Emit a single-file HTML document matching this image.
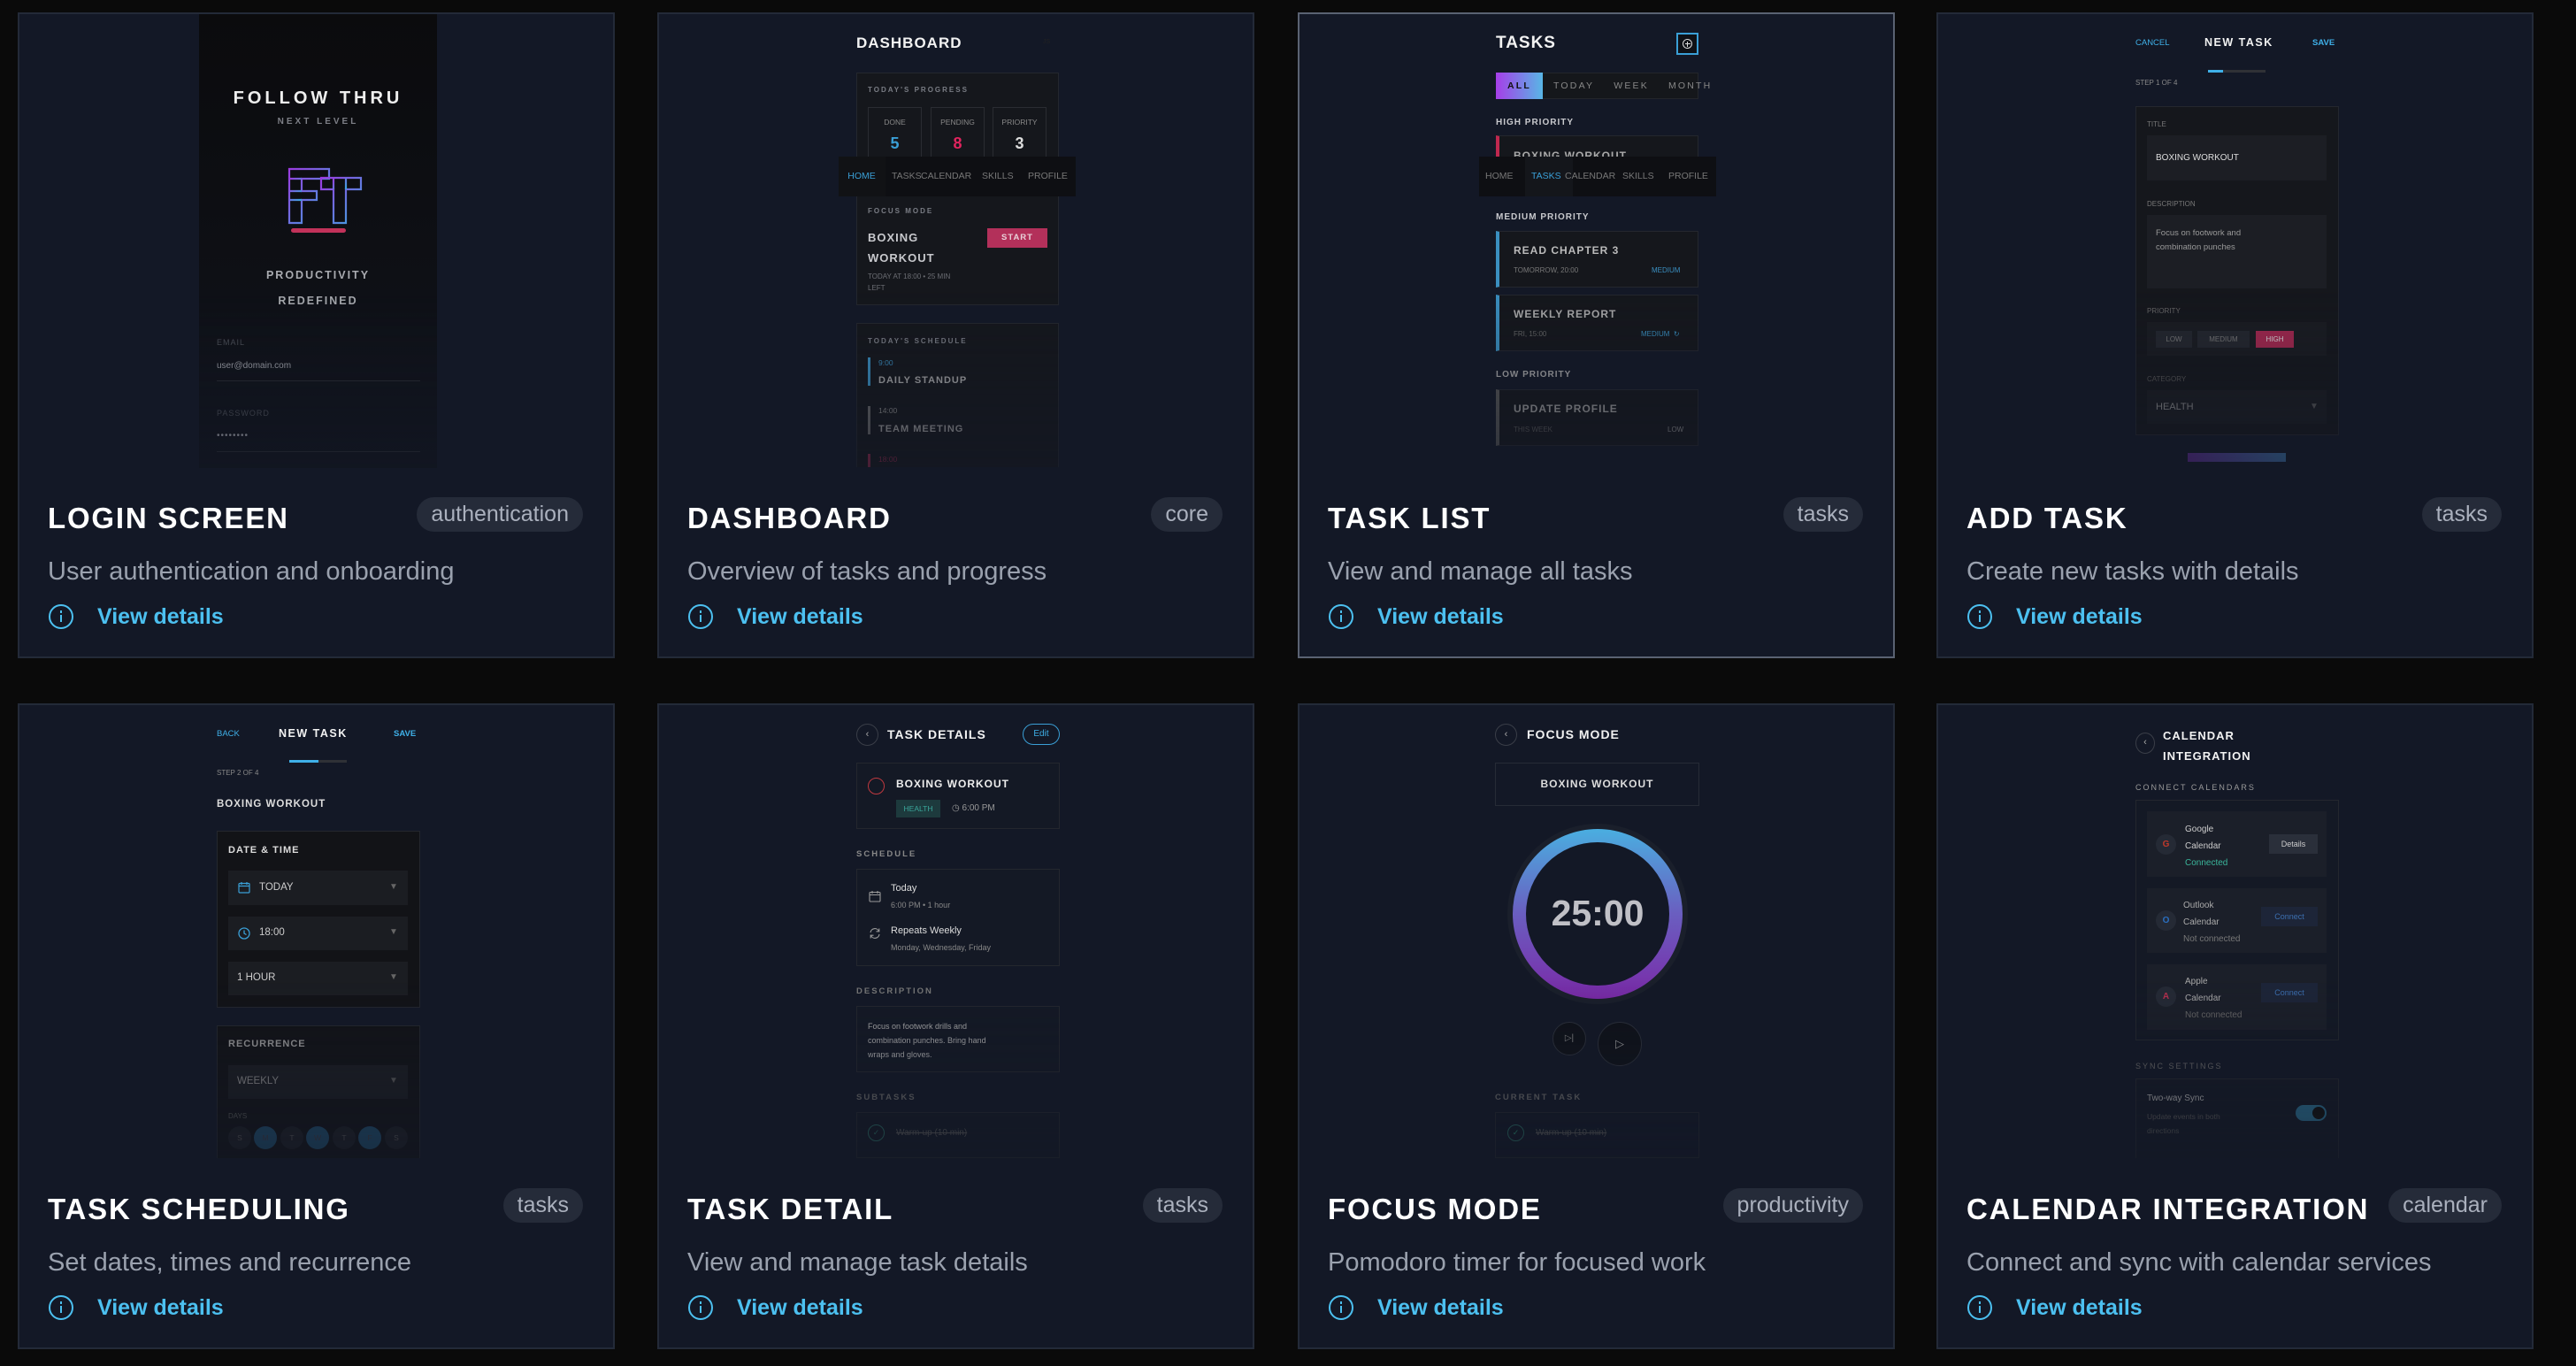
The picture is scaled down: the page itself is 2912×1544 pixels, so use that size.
<!DOCTYPE html>
<html><head><meta charset="utf-8">
<style>
*{margin:0;padding:0;box-sizing:border-box}
body{width:2912px;height:1544px;background:#0a0a0a;font-family:"Liberation Sans",sans-serif;position:relative;overflow:hidden}
.card{position:absolute;width:675px;height:730px;background:#131826;border:2px solid #232a38}
.card.sel{border-color:#5a6272}
.ttl{position:absolute;left:32px;top:553px;font-size:33px;line-height:33px;font-weight:bold;color:#fff;letter-spacing:1.8px;white-space:nowrap}
.tag{position:absolute;right:34px;top:546px;height:39px;line-height:39px;padding:0 16px;border-radius:20px;background:#252b39;color:#aab0bd;font-size:25px}
.desc{position:absolute;left:32px;top:616px;font-size:29px;line-height:29px;color:#9aa1ae;white-space:nowrap}
.vd{position:absolute;left:33px;top:667px;height:28px;width:400px}
.vd .ic{position:absolute;left:0;top:0;width:28px;height:28px;border:2.5px solid #4cc0f0;border-radius:50%}
.vd .ic:before{content:"";position:absolute;left:10.5px;top:5px;width:2.5px;height:2.5px;background:#4cc0f0}
.vd .ic:after{content:"";position:absolute;left:10.5px;top:10px;width:2.5px;height:8px;background:#4cc0f0}
.vd span{position:absolute;left:55px;top:0;line-height:28px;font-size:25px;font-weight:bold;color:#4cc0f0}
.ph{position:absolute;left:203px;top:0;width:269px;height:512px;overflow:visible;-webkit-mask-image:linear-gradient(#000 60%,rgba(0,0,0,.45) 100%);mask-image:linear-gradient(#000 60%,rgba(0,0,0,.45) 100%)}
.a{position:absolute;white-space:nowrap}
.h{font-weight:bold;letter-spacing:1px}
.lab{font-size:8px;font-weight:bold;letter-spacing:2px;color:#7a7d85}
.box{position:absolute;background:#15171c;border:1px solid #24272e}
.nav{position:absolute;left:-1px;top:161px;width:269px;height:45px;background:#0e0f13;font-size:10.5px;color:#777}
.nav span{position:absolute;top:0;line-height:45px}
</style></head><body>

<!-- CARD 1 LOGIN -->
<div class="card" style="left:20px;top:14px">
 <div class="ph" style="background:linear-gradient(#0b0b0d,#10131b);top:0;height:513px">
  <div class="a h" style="left:0;width:269px;text-align:center;top:84px;font-size:20px;line-height:22px;letter-spacing:4px;color:#eee">FOLLOW THRU</div>
  <div class="a h" style="left:0;width:269px;text-align:center;top:116px;font-size:10px;line-height:12px;letter-spacing:3px;color:#7d7f86">NEXT LEVEL</div>
  <svg class="a" style="left:100px;top:172px" width="86" height="80" viewBox="0 0 86 80">
   <defs><linearGradient id="lg" x1="0" y1="0" x2="1" y2="1"><stop offset="0" stop-color="#9b3be0"/><stop offset="1" stop-color="#3aa8e0"/></linearGradient></defs>
   <g fill="none" stroke="url(#lg)" stroke-width="2.2">
    <path d="M2 3H47V14H16V28H33V38H16V64H2Z"/><path d="M2 14H16M2 28H16M2 38H16"/>
    <path d="M38 13H83V26H66V64H52V26H38Z"/><path d="M52 13V26M66 13V26"/>
   </g>
   <rect x="4" y="70" width="62" height="5" rx="2.5" fill="#c2325a"/>
  </svg>
  <div class="a h" style="left:0;width:269px;text-align:center;top:287px;font-size:12.5px;line-height:16px;letter-spacing:2px;color:#a9abb0">PRODUCTIVITY</div>
  <div class="a h" style="left:0;width:269px;text-align:center;top:316px;font-size:12.5px;line-height:16px;letter-spacing:2px;color:#a9abb0">REDEFINED</div>
  <div class="a" style="left:20px;top:366px;font-size:9px;letter-spacing:1px;color:#4d5058">EMAIL</div>
  <div class="a" style="left:20px;top:392px;font-size:10px;color:#a5a7ad">user@domain.com</div>
  <div class="a" style="left:20px;top:414px;width:230px;height:1px;background:#2a2d33"></div>
  <div class="a" style="left:20px;top:446px;font-size:9px;letter-spacing:1px;color:#4d5058">PASSWORD</div>
  <div class="a" style="left:20px;top:471px;font-size:10px;color:#a5a7ad;letter-spacing:1px">••••••••</div>
  <div class="a" style="left:20px;top:494px;width:230px;height:1px;background:#2a2d33"></div>
 </div>
 <div class="ttl">LOGIN SCREEN</div><div class="tag">authentication</div>
 <div class="desc">User authentication and onboarding</div>
 <div class="vd"><div class="ic"></div><span>View details</span></div>
</div>

<!-- CARD 2 DASHBOARD -->
<div class="card" style="left:743px;top:14px">
 <div class="ph">
  <div class="a h" style="left:20px;top:23px;font-size:17px;line-height:20px;color:#f2f2f2">DASHBOARD</div>
  <div class="a" style="left:231px;top:28px;font-size:7px;color:#222">JS</div>
  <div class="box" style="left:20px;top:66px;width:229px;height:263px"></div>
  <div class="a lab" style="left:33px;top:81px">TODAY'S PROGRESS</div>
  <div class="a" style="left:33px;top:105px;width:61px;height:60px;border:1px solid #2a2c32"></div>
  <div class="a" style="left:104px;top:105px;width:61px;height:60px;border:1px solid #2a2c32"></div>
  <div class="a" style="left:174px;top:105px;width:61px;height:60px;border:1px solid #2a2c32"></div>
  <div class="a" style="left:33px;width:61px;text-align:center;top:117px;font-size:8.5px;color:#888">DONE</div>
  <div class="a" style="left:104px;width:61px;text-align:center;top:117px;font-size:8.5px;color:#888">PENDING</div>
  <div class="a" style="left:174px;width:61px;text-align:center;top:117px;font-size:8.5px;color:#888">PRIORITY</div>
  <div class="a" style="left:33px;width:61px;text-align:center;top:136px;font-size:18px;font-weight:bold;color:#3a9fd6">5</div>
  <div class="a" style="left:104px;width:61px;text-align:center;top:136px;font-size:18px;font-weight:bold;color:#e0245e">8</div>
  <div class="a" style="left:174px;width:61px;text-align:center;top:136px;font-size:18px;font-weight:bold;color:#ddd">3</div>
  <div class="nav"><span style="left:0;width:54px;text-align:center;color:#3a9fd6;background:#111215">HOME</span><span style="left:61px">TASKS</span><span style="left:94px">CALENDAR</span><span style="left:163px">SKILLS</span><span style="left:215px">PROFILE</span></div>
  <div class="a lab" style="left:33px;top:218px">FOCUS MODE</div>
  <div class="a h" style="left:33px;top:245px;font-size:13px;line-height:16px;color:#c8c9cd">BOXING</div>
  <div class="a h" style="left:33px;top:268px;font-size:13px;line-height:16px;color:#c8c9cd">WORKOUT</div>
  <div class="a h" style="left:168px;top:242px;width:68px;height:22px;line-height:22px;text-align:center;background:#b3305a;font-size:9.5px;color:#e8d0d8">START</div>
  <div class="a" style="left:33px;top:292px;font-size:8px;color:#6c6e74">TODAY AT 18:00 • 25 MIN</div>
  <div class="a" style="left:33px;top:305px;font-size:8px;color:#6c6e74">LEFT</div>
  <div class="box" style="left:20px;top:349px;width:229px;height:170px"></div>
  <div class="a lab" style="left:33px;top:365px">TODAY'S SCHEDULE</div>
  <div class="a" style="left:33px;top:388px;width:3px;height:32px;background:#3a8fc0"></div>
  <div class="a" style="left:45px;top:389px;font-size:8.5px;color:#3a8fc0">9:00</div>
  <div class="a h" style="left:45px;top:408px;font-size:11px;color:#aaa">DAILY STANDUP</div>
  <div class="a" style="left:33px;top:443px;width:3px;height:32px;background:#666"></div>
  <div class="a" style="left:45px;top:443px;font-size:8.5px;color:#888">14:00</div>
  <div class="a h" style="left:45px;top:463px;font-size:11px;color:#999">TEAM MEETING</div>
  <div class="a" style="left:33px;top:497px;width:3px;height:16px;background:#8a2848"></div>
  <div class="a" style="left:45px;top:498px;font-size:8.5px;color:#8a2848">18:00</div>
 </div>
 <div class="ttl">DASHBOARD</div><div class="tag">core</div>
 <div class="desc">Overview of tasks and progress</div>
 <div class="vd"><div class="ic"></div><span>View details</span></div>
</div>

<!-- CARD 3 TASK LIST -->
<div class="card sel" style="left:1467px;top:14px">
 <div class="ph">
  <div class="a h" style="left:19px;top:22px;font-size:19px;line-height:22px;color:#f2f2f2">TASKS</div>
  <div class="a" style="left:223px;top:21px;width:25px;height:25px;border:2px solid #3a9fd6;background:#0f1116"><div style="position:absolute;left:5px;top:5px;width:11px;height:11px;border:1.3px solid #ddd;border-radius:50%"></div><div style="position:absolute;left:9.5px;top:7.5px;width:1.5px;height:6px;background:#ddd"></div><div style="position:absolute;left:7.5px;top:9.7px;width:6px;height:1.5px;background:#ddd"></div></div>
  <div class="a" style="left:19px;top:66px;width:229px;height:30px;background:#15171b;border:1px solid #23252b"></div>
  <div class="a" style="left:19px;top:66px;width:53px;height:30px;background:linear-gradient(90deg,#a63ee8,#58b6e6)"></div>
  <div class="a" style="left:19px;top:66px;line-height:30px;font-size:10.5px;letter-spacing:2.2px;color:#888"><span style="display:inline-block;width:53px;text-align:center;color:#111;font-weight:bold">ALL</span><span style="margin-left:12px">TODAY</span><span style="margin-left:22px">WEEK</span><span style="margin-left:22px">MONTH</span><span style="margin-left:22px">⇅</span></div>
  <div class="a h" style="left:19px;top:117px;font-size:10px;color:#c8c9cd">HIGH PRIORITY</div>
  <div class="box" style="left:19px;top:137px;width:229px;height:40px;border-left:4px solid #c0284f"></div>
  <div class="a h" style="left:39px;top:153px;font-size:12px;color:#aaa">BOXING WORKOUT</div>
  <div class="nav"><span style="left:8px">HOME</span><span style="left:53px;width:54px;height:45px;background:#14161b"></span><span style="left:60px;color:#3a9fd6">TASKS</span><span style="left:98px">CALENDAR</span><span style="left:163px">SKILLS</span><span style="left:215px">PROFILE</span></div>
  <div class="a h" style="left:19px;top:224px;font-size:10px;color:#c8c9cd">MEDIUM PRIORITY</div>
  <div class="box" style="left:19px;top:245px;width:229px;height:64px;border-left:4px solid #3a8fc0"></div>
  <div class="a h" style="left:39px;top:260px;font-size:12px;color:#bbb">READ CHAPTER 3</div>
  <div class="a" style="left:39px;top:285px;font-size:8px;color:#777">TOMORROW, 20:00</div>
  <div class="a" style="left:195px;top:285px;font-size:8px;color:#3a8fc0">MEDIUM</div>
  <div class="box" style="left:19px;top:317px;width:229px;height:64px;border-left:4px solid #3a8fc0"></div>
  <div class="a h" style="left:39px;top:332px;font-size:12px;color:#aaa">WEEKLY REPORT</div>
  <div class="a" style="left:39px;top:357px;font-size:8px;color:#666">FRI, 15:00</div>
  <div class="a" style="left:183px;top:357px;font-size:8px;color:#3a8fc0">MEDIUM &nbsp;↻</div>
  <div class="a h" style="left:19px;top:402px;font-size:10px;color:#aaa">LOW PRIORITY</div>
  <div class="box" style="left:19px;top:424px;width:229px;height:64px;border-left:4px solid #555"></div>
  <div class="a h" style="left:39px;top:439px;font-size:12px;color:#999">UPDATE PROFILE</div>
  <div class="a" style="left:39px;top:465px;font-size:8px;color:#555">THIS WEEK</div>
  <div class="a" style="left:213px;top:465px;font-size:8px;color:#888">LOW</div>
 </div>
 <div class="ttl">TASK LIST</div><div class="tag">tasks</div>
 <div class="desc">View and manage all tasks</div>
 <div class="vd"><div class="ic"></div><span>View details</span></div>
</div>

<!-- CARD 4 ADD TASK -->
<div class="card" style="left:2189px;top:14px">
 <div class="ph">
  <div class="a" style="left:20px;top:27px;font-size:9.5px;color:#3fb0e8">CANCEL</div>
  <div class="a h" style="left:98px;top:25px;font-size:12.5px;color:#f2f2f2;letter-spacing:1.5px">NEW TASK</div>
  <div class="a" style="left:220px;top:27px;font-size:9.5px;font-weight:bold;color:#3fb0e8">SAVE</div>
  <div class="a" style="left:102px;top:63px;width:65px;height:3px;background:#2f3136"></div>
  <div class="a" style="left:102px;top:63px;width:17px;height:3px;background:#3fb0e8"></div>
  <div class="a" style="left:20px;top:73px;font-size:8px;color:#888">STEP 1 OF 4</div>
  <div class="box" style="left:20px;top:104px;width:230px;height:372px"></div>
  <div class="a" style="left:33px;top:120px;font-size:8px;color:#777">TITLE</div>
  <div class="a" style="left:33px;top:137px;width:203px;height:51px;background:#1c1e24"></div>
  <div class="a" style="left:43px;top:157px;font-size:10px;color:#ddd">BOXING WORKOUT</div>
  <div class="a" style="left:33px;top:210px;font-size:8px;color:#777">DESCRIPTION</div>
  <div class="a" style="left:33px;top:227px;width:203px;height:83px;background:#1c1e24"></div>
  <div class="a" style="left:43px;top:240px;font-size:9.5px;color:#999;line-height:16px">Focus on footwork and<br>combination punches</div>
  <div class="a" style="left:33px;top:331px;font-size:8px;color:#666">PRIORITY</div>
  <div class="a" style="left:33px;top:348px;width:203px;height:38px;background:#1a1c21"></div>
  <div class="a" style="left:43px;top:358px;width:41px;height:19px;line-height:19px;text-align:center;background:#24272e;font-size:8px;color:#777">LOW</div>
  <div class="a" style="left:90px;top:358px;width:59px;height:19px;line-height:19px;text-align:center;background:#24272e;font-size:8px;color:#777">MEDIUM</div>
  <div class="a" style="left:156px;top:358px;width:43px;height:19px;line-height:19px;text-align:center;background:#a3284f;font-size:8px;color:#ddd">HIGH</div>
  <div class="a" style="left:33px;top:408px;font-size:8px;color:#555">CATEGORY</div>
  <div class="a" style="left:33px;top:425px;width:203px;height:38px;background:#1a1c21"></div>
  <div class="a" style="left:43px;top:438px;font-size:11px;color:#888">HEALTH</div>
  <div class="a" style="left:217px;top:438px;font-size:10px;color:#555">▼</div>
  <div class="a" style="left:79px;top:496px;width:111px;height:10px;background:linear-gradient(90deg,#5b2a8c,#3a6ea0)"></div>
 </div>
 <div class="ttl">ADD TASK</div><div class="tag">tasks</div>
 <div class="desc">Create new tasks with details</div>
 <div class="vd"><div class="ic"></div><span>View details</span></div>
</div>

<!-- CARD 5 SCHEDULING -->
<div class="card" style="left:20px;top:795px">
 <div class="ph">
  <div class="a" style="left:20px;top:27px;font-size:9.5px;color:#3fb0e8">BACK</div>
  <div class="a h" style="left:90px;top:25px;font-size:12.5px;color:#f2f2f2;letter-spacing:1.5px">NEW TASK</div>
  <div class="a" style="left:220px;top:27px;font-size:9.5px;font-weight:bold;color:#3fb0e8">SAVE</div>
  <div class="a" style="left:102px;top:62px;width:65px;height:3px;background:#2f3136"></div>
  <div class="a" style="left:102px;top:62px;width:33px;height:3px;background:#3fb0e8"></div>
  <div class="a" style="left:20px;top:72px;font-size:8px;color:#888">STEP 2 OF 4</div>
  <div class="a h" style="left:20px;top:106px;font-size:11.5px;color:#ddd">BOXING WORKOUT</div>
  <div class="box" style="left:20px;top:142px;width:230px;height:200px;background:#121317"></div>
  <div class="a h" style="left:33px;top:158px;font-size:11px;color:#ddd">DATE &amp; TIME</div>
  <div class="a" style="left:33px;top:187px;width:203px;height:39px;background:#1b1d22"></div>
  <div class="a" style="left:33px;top:239px;width:203px;height:38px;background:#1b1d22"></div>
  <div class="a" style="left:33px;top:290px;width:203px;height:38px;background:#1b1d22"></div>
  <svg class="a" style="left:44px;top:199px" width="14" height="14" viewBox="0 0 14 14" fill="none" stroke="#3a9fd6" stroke-width="1.2"><rect x="1" y="2.5" width="12" height="10.5" rx="1"/><path d="M1 5.5H13M4 1V4M10 1V4"/></svg>
  <svg class="a" style="left:44px;top:251px" width="14" height="14" viewBox="0 0 14 14" fill="none" stroke="#3a9fd6" stroke-width="1.3"><circle cx="7" cy="7" r="6"/><path d="M7 3.5V7L9.5 8.5"/></svg>
  <div class="a" style="left:68px;top:200px;font-size:11.5px;color:#ccc">TODAY</div>
  <div class="a" style="left:68px;top:251px;font-size:11.5px;color:#ccc">18:00</div>
  <div class="a" style="left:43px;top:302px;font-size:11.5px;color:#ccc">1 HOUR</div>
  <div class="a" style="left:215px;top:200px;font-size:10px;color:#666">▼</div>
  <div class="a" style="left:215px;top:251px;font-size:10px;color:#666">▼</div>
  <div class="a" style="left:215px;top:302px;font-size:10px;color:#666">▼</div>
  <div class="box" style="left:20px;top:362px;width:230px;height:160px;background:#121317"></div>
  <div class="a h" style="left:33px;top:377px;font-size:11px;color:#999">RECURRENCE</div>
  <div class="a" style="left:33px;top:407px;width:203px;height:38px;background:#1b1d22"></div>
  <div class="a" style="left:43px;top:419px;font-size:11.5px;color:#888">WEEKLY</div>
  <div class="a" style="left:215px;top:419px;font-size:10px;color:#555">▼</div>
  <div class="a" style="left:33px;top:460px;font-size:8px;color:#555">DAYS</div>
  <div class="a" style="left:33px;top:476px;font-size:8.5px;color:#555;line-height:26px">
   <span style="position:absolute;left:0;width:26px;height:26px;border-radius:50%;background:#1c1e24;text-align:center">S</span>
   <span style="position:absolute;left:29px;width:26px;height:26px;border-radius:50%;background:#1f4a68;text-align:center;color:#3a3a44">M</span>
   <span style="position:absolute;left:59px;width:26px;height:26px;border-radius:50%;background:#1c1e24;text-align:center">T</span>
   <span style="position:absolute;left:88px;width:26px;height:26px;border-radius:50%;background:#1f4a68;text-align:center;color:#3a3a44">W</span>
   <span style="position:absolute;left:118px;width:26px;height:26px;border-radius:50%;background:#1c1e24;text-align:center">T</span>
   <span style="position:absolute;left:147px;width:26px;height:26px;border-radius:50%;background:#1f4a68;text-align:center;color:#3a3a44">F</span>
   <span style="position:absolute;left:177px;width:26px;height:26px;border-radius:50%;background:#1c1e24;text-align:center">S</span>
  </div>
 </div>
 <div class="ttl">TASK SCHEDULING</div><div class="tag">tasks</div>
 <div class="desc">Set dates, times and recurrence</div>
 <div class="vd"><div class="ic"></div><span>View details</span></div>
</div>

<!-- CARD 6 TASK DETAIL -->
<div class="card" style="left:743px;top:795px">
 <div class="ph">
  <div class="a" style="left:20px;top:21px;width:25px;height:25px;border:1px solid #3a3e48;border-radius:50%;text-align:center;line-height:22px;font-size:11px;color:#aaa">‹</div>
  <div class="a h" style="left:55px;top:25px;font-size:14px;line-height:16px;color:#f2f2f2">TASK DETAILS</div>
  <div class="a" style="left:208px;top:21px;width:42px;height:24px;border:1.3px solid #3a9fd6;border-radius:12px;text-align:center;line-height:21px;font-size:10px;color:#3fb0e8">Edit</div>
  <div class="box" style="left:20px;top:65px;width:230px;height:75px;background:#141925"></div>
  <div class="a" style="left:33px;top:82px;width:19px;height:19px;border:1.5px solid #c0393f;border-radius:50%"></div>
  <div class="a h" style="left:65px;top:82px;font-size:12px;color:#eee">BOXING WORKOUT</div>
  <div class="a" style="left:65px;top:107px;width:50px;height:20px;line-height:20px;text-align:center;background:#1d3a3d;color:#3aa69a;font-size:8.5px">HEALTH</div>
  <div class="a" style="left:128px;top:111px;font-size:10px;color:#999">◷ 6:00 PM</div>
  <div class="a" style="left:20px;top:163px;font-size:9.5px;font-weight:bold;letter-spacing:2px;color:#888">SCHEDULE</div>
  <div class="box" style="left:20px;top:185px;width:230px;height:110px;background:#141925"></div>
  <svg class="a" style="left:34px;top:209px" width="14" height="14" viewBox="0 0 14 14" fill="none" stroke="#999" stroke-width="1.1"><rect x="1" y="2.5" width="12" height="10.5" rx="1"/><path d="M1 5.5H13M4 1V4M10 1V4"/></svg>
  <svg class="a" style="left:34px;top:251px" width="14" height="14" viewBox="0 0 14 14" fill="none" stroke="#999" stroke-width="1.1"><path d="M2 6A5 5 0 0 1 11.5 4.5M12 8A5 5 0 0 1 2.5 9.5"/><path d="M11.8 1.5V4.8H8.5M2.2 12.5V9.2H5.5"/></svg>
  <div class="a" style="left:59px;top:201px;font-size:11px;color:#ddd">Today</div>
  <div class="a" style="left:59px;top:221px;font-size:9px;color:#888">6:00 PM • 1 hour</div>
  <div class="a" style="left:59px;top:249px;font-size:11px;color:#ddd">Repeats Weekly</div>
  <div class="a" style="left:59px;top:269px;font-size:9px;color:#888">Monday, Wednesday, Friday</div>
  <div class="a" style="left:20px;top:318px;font-size:9.5px;font-weight:bold;letter-spacing:2px;color:#777">DESCRIPTION</div>
  <div class="box" style="left:20px;top:340px;width:230px;height:75px;background:#141925"></div>
  <div class="a" style="left:33px;top:355px;font-size:9px;line-height:16px;color:#aaa">Focus on footwork drills and<br>combination punches. Bring hand<br>wraps and gloves.</div>
  <div class="a" style="left:20px;top:438px;font-size:9.5px;font-weight:bold;letter-spacing:2px;color:#666">SUBTASKS</div>
  <div class="box" style="left:20px;top:460px;width:230px;height:52px;background:#141925"></div>
  <div class="a" style="left:33px;top:474px;width:19px;height:19px;border:1.3px solid #2a6a60;border-radius:50%;text-align:center;font-size:9px;line-height:16px;color:#2a6a60">✓</div>
  <div class="a" style="left:65px;top:478px;font-size:10px;color:#555;text-decoration:line-through">Warm-up (10 min)</div>
 </div>
 <div class="ttl">TASK DETAIL</div><div class="tag">tasks</div>
 <div class="desc">View and manage task details</div>
 <div class="vd"><div class="ic"></div><span>View details</span></div>
</div>

<!-- CARD 7 FOCUS -->
<div class="card" style="left:1467px;top:795px">
 <div class="ph">
  <div class="a" style="left:18px;top:21px;width:25px;height:25px;border:1px solid #3a3e48;border-radius:50%;text-align:center;line-height:22px;font-size:11px;color:#aaa">‹</div>
  <div class="a h" style="left:54px;top:25px;font-size:14px;line-height:16px;color:#f2f2f2">FOCUS MODE</div>
  <div class="box" style="left:18px;top:65px;width:231px;height:49px;background:#131826;border-color:#262b36"></div>
  <div class="a h" style="left:18px;width:231px;text-align:center;top:82px;font-size:12px;color:#ddd">BOXING WORKOUT</div>
  <div class="a" style="left:32px;top:134px;width:204px;height:204px;border-radius:50%;background:#1a1f2b"></div>
  <div class="a" style="left:38px;top:140px;width:192px;height:192px;border-radius:50%;background:linear-gradient(#4aaee0,#6a5ec0 50%,#7a2aa8)"></div>
  <div class="a" style="left:53px;top:155px;width:162px;height:162px;border-radius:50%;background:#131826"></div>
  <div class="a" style="left:32px;width:204px;text-align:center;top:212px;font-size:41px;line-height:46px;font-weight:bold;color:#c0c0c6">25:00</div>
  <div class="a" style="left:83px;top:358px;width:38px;height:38px;border-radius:50%;border:1px solid #2c303a;background:#0f1219;text-align:center;line-height:36px;font-size:10px;color:#888">▷|</div>
  <div class="a" style="left:134px;top:358px;width:50px;height:50px;border-radius:50%;border:1px solid #2c303a;background:#0f1219;text-align:center;line-height:48px;font-size:13px;color:#999">▷</div>
  <div class="a" style="left:18px;top:438px;font-size:9.5px;font-weight:bold;letter-spacing:2px;color:#666">CURRENT TASK</div>
  <div class="box" style="left:18px;top:460px;width:231px;height:52px;background:#131826"></div>
  <div class="a" style="left:32px;top:474px;width:19px;height:19px;border:1.3px solid #2a6a60;border-radius:50%;text-align:center;font-size:9px;line-height:16px;color:#2a8a70">✓</div>
  <div class="a" style="left:64px;top:478px;font-size:10px;color:#555;text-decoration:line-through">Warm-up (10 min)</div>
 </div>
 <div class="ttl">FOCUS MODE</div><div class="tag">productivity</div>
 <div class="desc">Pomodoro timer for focused work</div>
 <div class="vd"><div class="ic"></div><span>View details</span></div>
</div>

<!-- CARD 8 CALENDAR -->
<div class="card" style="left:2189px;top:795px">
 <div class="ph">
  <div class="a" style="left:20px;top:31px;width:22px;height:24px;border:1px solid #3a3e48;border-radius:50%;text-align:center;line-height:21px;font-size:11px;color:#aaa">‹</div>
  <div class="a h" style="left:51px;top:23px;font-size:13px;line-height:23px;color:#f2f2f2">CALENDAR<br>INTEGRATION</div>
  <div class="a" style="left:20px;top:88px;font-size:9px;letter-spacing:2px;color:#999">CONNECT CALENDARS</div>
  <div class="box" style="left:20px;top:107px;width:230px;height:272px;background:#141925"></div>
  <div class="a" style="left:33px;top:120px;width:203px;height:74px;background:#1b1f29"></div>
  <div class="a" style="left:33px;top:207px;width:203px;height:73px;background:#1b1f29"></div>
  <div class="a" style="left:33px;top:293px;width:203px;height:74px;background:#1b1f29"></div>
  <div class="a" style="left:43px;top:146px;width:23px;height:23px;border-radius:50%;background:#252a35;text-align:center;line-height:23px;font-size:10px;font-weight:bold;color:#c0392b">G</div>
  <div class="a" style="left:43px;top:232px;width:23px;height:23px;border-radius:50%;background:#252a35;text-align:center;line-height:23px;font-size:10px;font-weight:bold;color:#2a6fc0">O</div>
  <div class="a" style="left:43px;top:318px;width:23px;height:23px;border-radius:50%;background:#252a35;text-align:center;line-height:23px;font-size:10px;font-weight:bold;color:#b8304f">A</div>
  <div class="a" style="left:76px;top:131px;font-size:10px;line-height:19px;color:#ccc">Google<br>Calendar<br><span style="color:#3ab59a">Connected</span></div>
  <div class="a" style="left:74px;top:217px;font-size:10px;line-height:19px;color:#aaa">Outlook<br>Calendar<br><span style="color:#777">Not connected</span></div>
  <div class="a" style="left:76px;top:303px;font-size:10px;line-height:19px;color:#aaa">Apple<br>Calendar<br><span style="color:#666">Not connected</span></div>
  <div class="a" style="left:171px;top:146px;width:55px;height:22px;line-height:22px;text-align:center;background:#2a2f3a;font-size:9px;color:#ccc">Details</div>
  <div class="a" style="left:162px;top:228px;width:64px;height:22px;line-height:22px;text-align:center;background:#1d2538;font-size:9px;color:#3c6fb0">Connect</div>
  <div class="a" style="left:162px;top:314px;width:64px;height:22px;line-height:22px;text-align:center;background:#1d2538;font-size:9px;color:#3c6fb0">Connect</div>
  <div class="a" style="left:20px;top:403px;font-size:9px;letter-spacing:2px;color:#666">SYNC SETTINGS</div>
  <div class="box" style="left:20px;top:422px;width:230px;height:95px;background:#141925"></div>
  <div class="a" style="left:33px;top:439px;font-size:10px;color:#aaa">Two-way Sync</div>
  <div class="a" style="left:33px;top:457px;font-size:8.5px;line-height:16px;color:#555">Update events in both<br>directions</div>
  <div class="a" style="left:201px;top:452px;width:35px;height:18px;border-radius:9px;background:#2a6a8a"><div style="position:absolute;right:2px;top:2px;width:14px;height:14px;border-radius:50%;background:#111"></div></div>
 </div>
 <div class="ttl">CALENDAR INTEGRATION</div><div class="tag">calendar</div>
 <div class="desc">Connect and sync with calendar services</div>
 <div class="vd"><div class="ic"></div><span>View details</span></div>
</div>

</body></html>
